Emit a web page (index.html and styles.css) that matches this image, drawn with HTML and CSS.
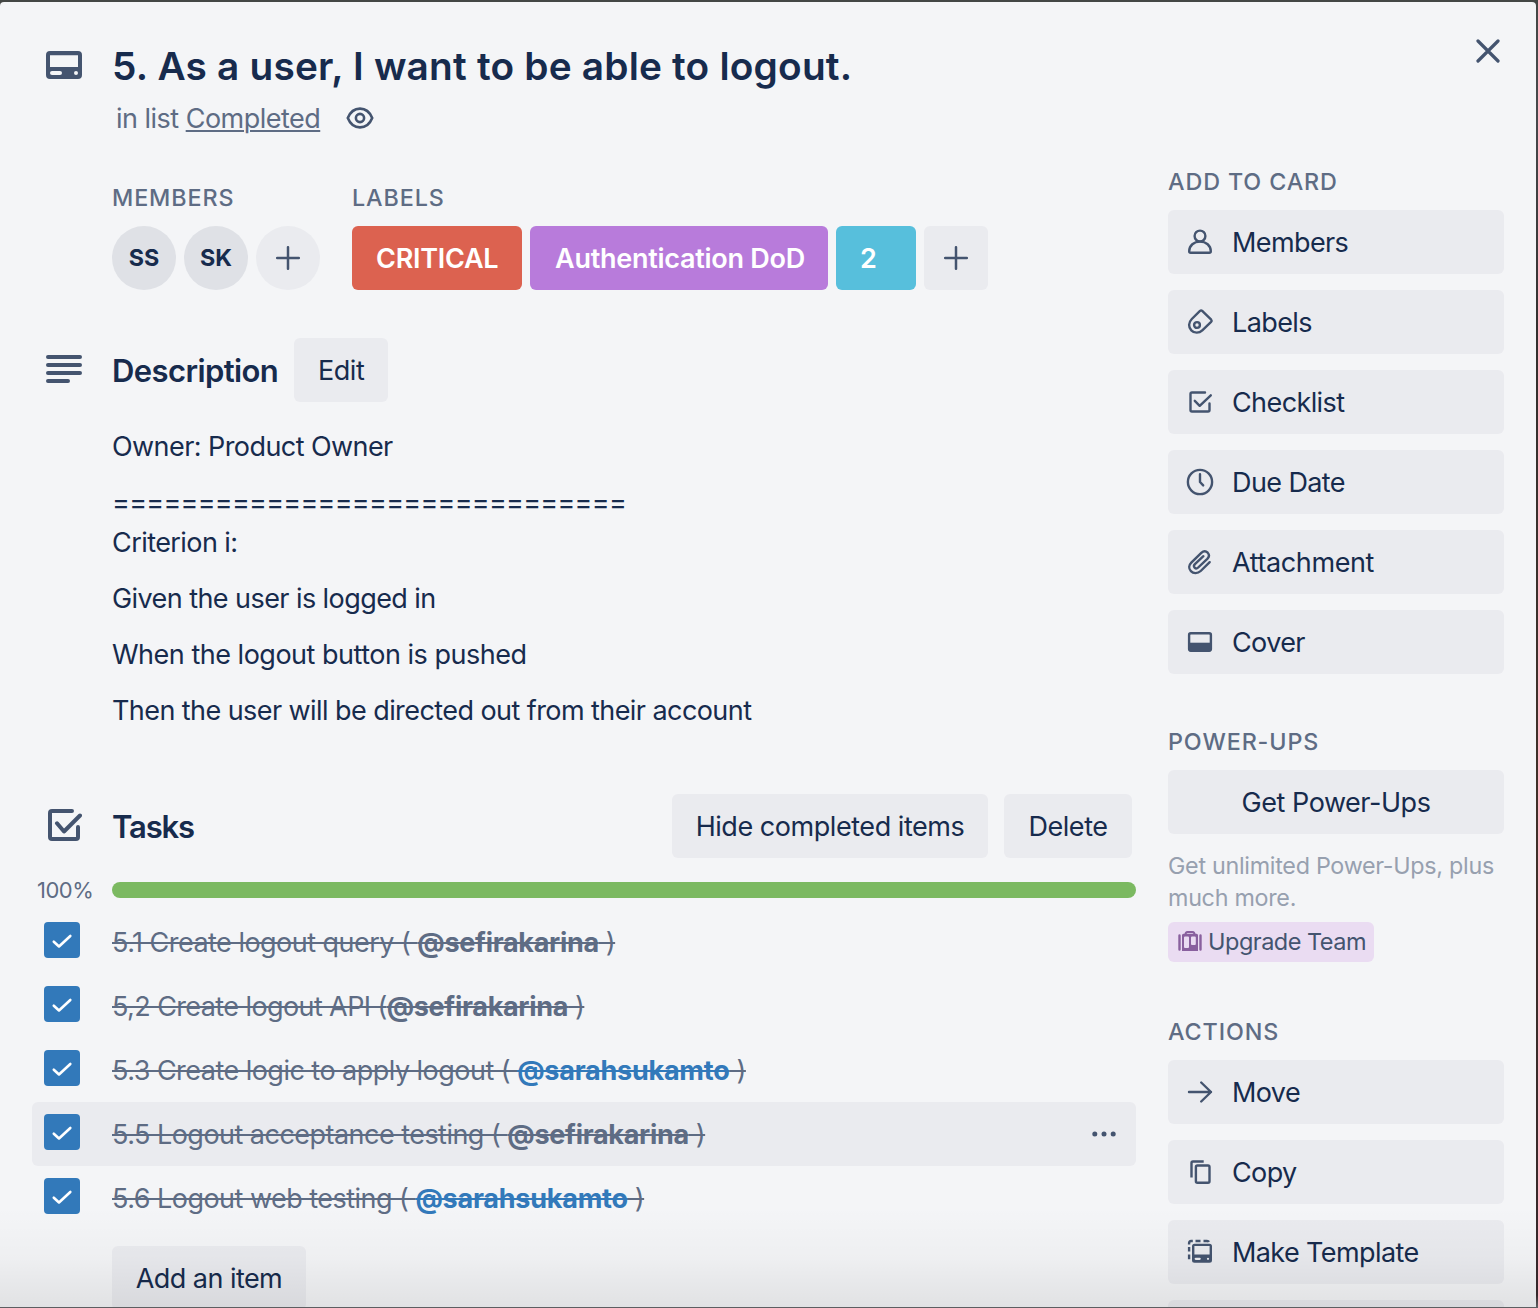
FILE: index.html
```
<!DOCTYPE html>
<html lang="en">
<head>
<meta charset="utf-8">
<title>5. As a user, I want to be able to logout.</title>
<link rel="stylesheet" href="styles.css">
</head>
<body>
<main class="card">
  <header class="card-header">
    <svg class="header-icon icon" width="36" height="28" viewBox="0 0 36 28"><path fill="currentColor" fill-rule="evenodd" d="M4 0h28a4 4 0 0 1 4 4v20a4 4 0 0 1-4 4H4a4 4 0 0 1-4-4V4a4 4 0 0 1 4-4zM4 4.200V16h28V4.200zM6 20a2 2 0 0 0 0 4h8a2 2 0 0 0 0-4zM30 20a2 2 0 1 0 0 4a2 2 0 0 0 0-4z"/></svg>
    <div class="header-text">
      <h1>5. As a user, I want to be able to logout.</h1>
      <p class="in-list"><span>in list <a>Completed</a></span>
        <svg class="icon eye" width="28" height="24" viewBox="0 0 28 24" fill="none" stroke="currentColor" stroke-width="2.600"><path d="M1.800 12C4 6.500 8.500 2.600 14 2.600S24 6.500 26.200 12C24 17.500 19.500 21.400 14 21.400S4 17.500 1.800 12z"/><circle cx="14" cy="12" r="4.100"/></svg>
      </p>
    </div>
    <svg class="icon close" width="24" height="24" viewBox="0 0 24 24" fill="none" stroke="currentColor" stroke-width="3.200" stroke-linecap="round"><path d="M2 2l20 20M22 2L2 22"/></svg>
  </header>

  <div class="card-body">
    <div class="main-col">
      <section class="meta">
        <div>
          <h3>Members</h3>
          <div class="chips">
            <span class="avatar">SS</span>
            <span class="avatar">SK</span>
            <span class="avatar add"><svg class="icon" width="24" height="24" viewBox="0 0 24 24" fill="none" stroke="currentColor" stroke-width="2.500" stroke-linecap="round"><path d="M12 1.200v21.600M1.200 12h21.600"/></svg></span>
          </div>
        </div>
        <div>
          <h3>Labels</h3>
          <div class="chips">
            <span class="label red">CRITICAL</span>
            <span class="label purple">Authentication DoD</span>
            <span class="label sky">2</span>
            <span class="label plus"><svg class="icon" width="24" height="24" viewBox="0 0 24 24" fill="none" stroke="currentColor" stroke-width="2.500" stroke-linecap="round"><path d="M12 1.200v21.600M1.200 12h21.600"/></svg></span>
          </div>
        </div>
      </section>

      <section class="description">
        <div class="section-head">
          <svg class="icon section-icon" width="36" height="28" viewBox="0 0 36 28" fill="none" stroke="currentColor" stroke-width="4" stroke-linecap="round"><path d="M2 2h32M2 10h32M2 18h32M2 26h20"/></svg>
          <h2>Description</h2>
          <button class="btn edit">Edit</button>
        </div>
        <div class="prose">
          <p>Owner: Product Owner</p>
          <p><span class="rule">==============================</span><br>Criterion i:</p>
          <p>Given the user is logged in</p>
          <p class="when">When the logout button is pushed</p>
          <p>Then the user will be directed out from their account</p>
        </div>
      </section>

      <section class="tasks">
        <div class="section-head">
          <svg class="icon section-icon" width="36" height="36" viewBox="0 0 36 36" fill="none" stroke="currentColor" stroke-width="4" stroke-linecap="round" stroke-linejoin="round"><path d="M26 4H6q-2 0-2 2v24q0 2 2 2h24q2 0 2-2V20"/><path d="M11 16.300l7 8.200L34 8.500"/></svg>
          <h2 class="tight">Tasks</h2>
          <button class="btn hide">Hide completed items</button>
          <button class="btn delete">Delete</button>
        </div>
        <div class="progress"><span class="percent">100%</span><div class="track"><div class="fill" style="width:100%"></div></div></div>
        <ul class="items">
          <li><span class="check"><svg width="36" height="36" viewBox="0 0 36 36"><path d="M9.800 19.700l5.200 4.800L26.300 14"/></svg></span><span class="task">5.1 Create logout query ( <b>@sefirakarina</b> )</span></li>
          <li><span class="check"><svg width="36" height="36" viewBox="0 0 36 36"><path d="M9.800 19.700l5.200 4.800L26.300 14"/></svg></span><span class="task api">5,2 Create logout API (<b>@sefirakarina</b> )</span></li>
          <li><span class="check"><svg width="36" height="36" viewBox="0 0 36 36"><path d="M9.800 19.700l5.200 4.800L26.300 14"/></svg></span><span class="task">5.3 Create logic to apply logout ( <b class="me">@sarahsukamto</b> )</span></li>
          <li class="hover"><span class="check"><svg width="36" height="36" viewBox="0 0 36 36"><path d="M9.800 19.700l5.200 4.800L26.300 14"/></svg></span><span class="task">5.5 Logout acceptance testing ( <b>@sefirakarina</b> )</span><svg class="dots" width="24" height="6" viewBox="0 0 24 6" fill="#44546f"><circle cx="2.800" cy="3" r="2.500"/><circle cx="12" cy="3" r="2.500"/><circle cx="21.200" cy="3" r="2.500"/></svg></li>
          <li><span class="check"><svg width="36" height="36" viewBox="0 0 36 36"><path d="M9.800 19.700l5.200 4.800L26.300 14"/></svg></span><span class="task">5.6 Logout web testing ( <b class="me">@sarahsukamto</b> )</span></li>
        </ul>
        <button class="btn add-item">Add an item</button>
      </section>
    </div>

    <aside class="sidebar">
      <section>
        <h3>Add to card</h3>
        <div class="stack">
          <button class="btn side"><svg class="icon glyph" viewBox="0 0 32 32"><circle cx="16" cy="10" r="5.400"/><path d="M5.200 25.300C5.200 19.500 10 15.600 16 15.600S26.800 19.500 26.800 25.300q0 1.500-1.500 1.500H6.700q-1.500 0-1.500-1.500z"/></svg>Members</button>
          <button class="btn side"><svg class="icon glyph" viewBox="0 0 32 32"><path d="M16 4.900L7.800 13C4.300 16.500 4.300 21.300 7.300 24.300C10.300 27.400 15.100 27.400 18.300 24.300L27.100 15.900Q28.200 14.800 27.200 13.700L18.200 4.900Q17.100 3.900 16 4.900z"/><circle cx="13" cy="19" r="2.900"/></svg>Labels</button>
          <button class="btn side"><svg class="icon glyph" viewBox="0 0 32 32"><path d="M21 6.500H8q-1.500 0-1.500 1.500v16q0 1.500 1.500 1.500h16q1.500 0 1.500-1.500v-6.500"/><path d="M10.800 14.800l4.900 5L26.800 9.300"/></svg>Checklist</button>
          <button class="btn side"><svg class="icon glyph" viewBox="0 0 32 32"><circle cx="16" cy="16" r="12.100"/><path d="M16 8.200V16l3.200 3.400"/></svg>Due Date</button>
          <button class="btn side attachment"><svg class="icon glyph" viewBox="0 0 32 32"><path d="M25.700 16.200L16.700 25C13.500 28 9.200 27.600 6.900 25.200C4.500 22.600 4.700 19.200 7.300 16.600L17.300 6.900C19.400 4.900 22 5 23.700 6.700C25.400 8.500 25.200 10.900 23.300 12.800L14.200 21.500C13 22.600 11.500 22.500 10.600 21.600C9.700 20.600 9.800 19.300 10.900 18.200L19.400 10.200"/></svg>Attachment</button>
          <button class="btn side"><svg class="icon glyph" viewBox="0 0 32 32"><rect x="5.100" y="7.300" width="21.800" height="17.400" rx="1.600"/><path fill="currentColor" stroke="none" d="M5 16.700h22V25H5z"/></svg>Cover</button>
        </div>
      </section>
      <section class="power-ups">
        <h3>Power-Ups</h3>
        <button class="btn power">Get Power-Ups</button>
        <p class="quiet">Get unlimited Power-Ups, plus much more.</p>
        <a class="upgrade"><svg width="24" height="20" viewBox="0 0 24 20" fill="none" stroke="currentColor" stroke-width="2"><path d="M1.500 4.500v14M22.500 4.500v14" stroke-linecap="round" stroke-width="2.400"/><path d="M7.500 3.500q0-2.500 2-2.500h5q2 0 2 2.500"/><path fill="currentColor" stroke="none" fill-rule="evenodd" d="M5.500 2.800h13a1.500 1.500 0 0 1 1.500 1.500V20H4V4.300A1.500 1.500 0 0 1 5.500 2.800zM7 5.500q-1 0-1 1V16q0 1 1 1h3q1 0 1-1V6.500q0-1-1-1zM14 5.500q-1 0-1 1V13q0 1 1 1h2.800q1 0 1-1V6.500q0-1-1-1z"/></svg>Upgrade Team</a>
      </section>
      <section>
        <h3>Actions</h3>
        <div class="stack">
          <button class="btn side"><svg class="icon glyph" viewBox="0 0 32 32"><path d="M5 16h22M17.200 6.500L27 16l-9.800 9.500"/></svg>Move</button>
          <button class="btn side"><svg class="icon glyph" viewBox="0 0 32 32"><path stroke-linecap="butt" d="M7.500 21.500V7Q7.500 5.500 9 5.500h10.700"/><rect x="11.900" y="9.500" width="13.600" height="17.300" rx="1.500"/></svg>Copy</button>
          <button class="btn side"><svg class="icon glyph" viewBox="0 0 32 32"><path fill="currentColor" stroke="none" fill-rule="evenodd" d="M10.500 7.700h15a2.500 2.500 0 0 1 2.500 2.500v14a2.500 2.500 0 0 1-2.500 2.500h-15a2.500 2.500 0 0 1-2.500-2.500v-14a2.500 2.500 0 0 1 2.500-2.500zM10.400 10v8.500h15.200V10zM11.700 21.700a1.100 1.100 0 0 0 0 2.200h4a1.100 1.100 0 0 0 0-2.200zM24 21.700a1.100 1.100 0 1 0 .01 0z"/><path stroke-linecap="butt" d="M5.100 8.500V7q0-2 2-2h1.700M11.500 5h5M19.500 5h3.500q1.500 0 2 .9M5.100 11v4.500M5.100 18.500v4.800"/></svg>Make Template</button>
          <button class="btn side"></button>
        </div>
      </section>
    </aside>
  </div>
</main>
</body>
</html>
```
FILE: styles.css
```
* { box-sizing: border-box; }

body {
  margin: 0;
  height: 1308px;
  overflow: hidden;
  padding: 2px 2px 1px 0;
  background: linear-gradient(#444745 0%, #46484b 9%, #33302f 25%, #3f3029 60%, #35272a 99%, #5d5e61 99.900%);
  font: 400 27px/40px Inter, "Liberation Sans", sans-serif;
  font-feature-settings: "calt" 0;
  letter-spacing: -0.57px;
  color: #172b4d;
}

h1, h2, h3, p, ul { margin: 0; padding: 0; }

.card {
  position: relative;
  height: 1305px;
  overflow: hidden;
  border-radius: 4px 4px 0 0;
  background: #f4f5f7;
}

/* shade at the foot of the scrolled window */
.card::after {
  content: "";
  position: absolute;
  inset: auto 0 0;
  height: 100px;
  background: linear-gradient(rgba(0, 0, 0, 0), rgba(0, 0, 0, .025) 50%, rgba(0, 0, 0, .08));
}

.icon { display: block; flex: none; color: #44546f; }

.card-header {
  display: flex;
  align-items: flex-start;
  height: 136px;
  padding: 40px 36px 0 46px;
}
.header-icon { margin: 9px 30px 0 0; }
.header-text { flex: 1; }
h1 { font-size: 38.800px; line-height: 48px; font-weight: 600; letter-spacing: .2px; }
.in-list {
  display: flex;
  align-items: center;
  gap: 26px;
  margin: 9px 0 0 4px;
  color: #5e6c84;
  letter-spacing: -.52px;
}
.in-list a { text-decoration: underline; text-decoration-thickness: 2px; text-underline-offset: 2px; }
.eye { margin-top: -2px; }
.close { margin-top: -3px; }

.card-body { display: flex; gap: 32px; padding: 0 32px; }
.main-col { width: 1104px; padding-top: 40px; }
.sidebar { width: 336px; padding-top: 24px; }

h3 {
  margin-bottom: 8px;
  font-size: 23.300px;
  font-weight: 500;
  letter-spacing: .9px;
  text-transform: uppercase;
  color: #5e6c84;
}

.meta { display: flex; gap: 32px; padding-left: 80px; }
.chips { display: flex; gap: 8px; }
.avatar, .label { display: flex; align-items: center; height: 64px; }
.avatar {
  justify-content: center;
  width: 64px;
  border-radius: 50%;
  background: #dfe1e6;
  font-size: 23.300px;
  font-weight: 700;
  letter-spacing: 0;
}
.label { border-radius: 6px; padding: 2px 0 0 24px; color: #fff; font-weight: 600; letter-spacing: -.26px; }
.red { width: 170px; background: #dc6250; }
.purple { width: 298px; padding-left: 25px; background: #b87bdb; }
.sky { width: 80px; background: #57bfdc; }
.plus { width: 64px; padding: 0; justify-content: center; }
.avatar.add, .plus { background: #eaebef; }

.section-head { display: flex; align-items: center; height: 64px; }
.section-icon { margin: -2px 30px 0 14px; }
h2 { font-size: 31px; font-weight: 600; letter-spacing: -.6px; padding-top: 2px; }
.tight { letter-spacing: -1.150px; }

.btn {
  display: block;
  height: 64px;
  padding: 2px 0 0;
  border: 0;
  border-radius: 6px;
  background: #eaebef;
  font: inherit;
  letter-spacing: -.45px;
  color: inherit;
}
.edit { width: 94px; margin-left: 16px; }
.hide { width: 316px; margin-left: auto; }
.delete { width: 128px; margin: 0 4px 0 16px; }

.description { margin-top: 48px; }
.prose { display: grid; gap: 16px; padding: 25px 0 0 80px; }
.rule { letter-spacing: -.73px; }
.when { letter-spacing: -.49px; }

.tasks { margin-top: 63px; }
.progress { display: flex; align-items: center; height: 64px; margin-bottom: -12px; }
.percent { width: 80px; padding-left: 5px; font-size: 22px; letter-spacing: -.5px; color: #5e6c84; }
.track { flex: 1; height: 16px; border-radius: 8px; overflow: hidden; background: #dfe1e6; }
.fill { height: 16px; background: #7bb961; }

.items { list-style: none; }
.items li { display: flex; align-items: center; height: 64px; padding: 0 20px 0 12px; border-radius: 6px; }
.items .hover { background: #eaebef; }
.check { width: 36px; height: 36px; margin: -4px 32px 0 0; border-radius: 4px; background: #3279ba; }
.check svg { display: block; fill: none; stroke: #fff; stroke-width: 2.600px; stroke-linecap: round; stroke-linejoin: round; }
.task { flex: 1; padding-top: 2px; color: #5e6c84; text-decoration: line-through; text-decoration-thickness: 2px; letter-spacing: -.53px; }
.task b { font-weight: 700; letter-spacing: -.32px; }
.api { letter-spacing: -.6px; }
.task .me { color: #3279ba; text-decoration: line-through 2px #3279ba; letter-spacing: -.24px; }
.add-item { width: 194px; margin: 16px 0 0 80px; letter-spacing: -.55px; }

.sidebar section { margin-bottom: 48px; }
.sidebar .power-ups { margin-bottom: 50px; }
.stack { display: grid; gap: 16px; }
.side { display: flex; align-items: center; gap: 16px; width: 336px; padding-left: 16px; letter-spacing: -.6px; }
.attachment { letter-spacing: -.4px; }
.glyph { width: 32px; height: 32px; margin-top: -2px; fill: none; stroke: currentColor; stroke-width: 2.400px; stroke-linecap: round; stroke-linejoin: round; }
.power { width: 336px; }
.quiet { margin-top: 16px; font-size: 23.300px; line-height: 32px; letter-spacing: -.28px; color: #97a0af; }
.upgrade {
  display: flex;
  align-items: center;
  gap: 6px;
  width: 206px;
  height: 40px;
  margin-top: 8px;
  padding-left: 10px;
  border-radius: 6px;
  background: #eadcf2;
  font-size: 23.500px;
  letter-spacing: -.5px;
  color: #44546f;
}
.upgrade svg { color: #89609e; margin-top: -2px; }
```
